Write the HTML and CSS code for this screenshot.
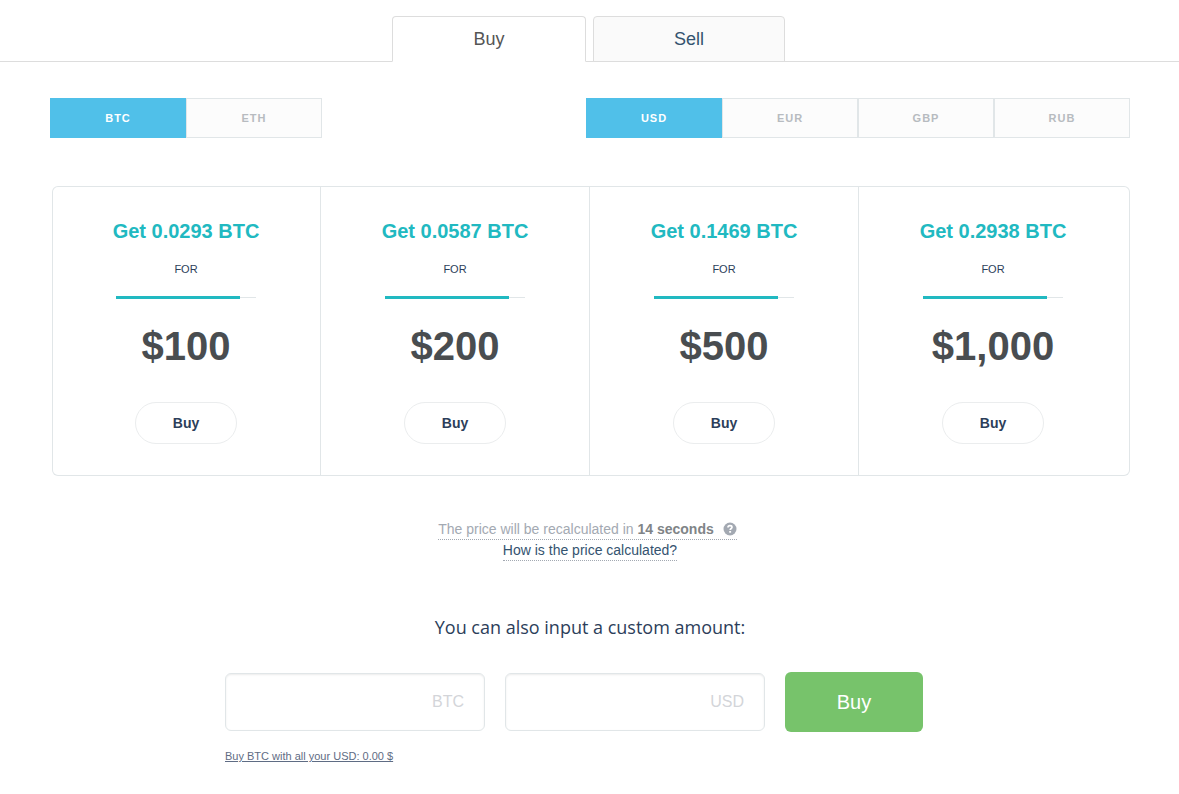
FILE: index.html
```html
<!DOCTYPE html>
<html lang="en">
<head>
<meta charset="utf-8">
<meta name="viewport" content="width=device-width, initial-scale=1">
<title>Buy BTC</title>
<link rel="stylesheet" href="styles.css">
</head>
<body>
<nav class="tabs">
  <a class="tab tab-active" href="#buy">Buy</a>
  <a class="tab" href="#sell">Sell</a>
</nav>
<main class="content">
  <div class="toggles">
    <div class="toggle-group">
      <button class="toggle toggle-active" type="button">BTC</button>
      <button class="toggle" type="button">ETH</button>
    </div>
    <div class="toggle-group">
      <button class="toggle toggle-active" type="button">USD</button>
      <button class="toggle" type="button">EUR</button>
      <button class="toggle" type="button">GBP</button>
      <button class="toggle" type="button">RUB</button>
    </div>
  </div>

  <section class="plans">
    <article class="plan">
      <h2 class="plan-title">Get 0.0293 BTC</h2>
      <p class="plan-for">FOR</p>
      <div class="timer"><div class="timer-fill"></div></div>
      <p class="plan-price">$100</p>
      <button class="plan-buy" type="button">Buy</button>
    </article>
    <article class="plan">
      <h2 class="plan-title">Get 0.0587 BTC</h2>
      <p class="plan-for">FOR</p>
      <div class="timer"><div class="timer-fill"></div></div>
      <p class="plan-price">$200</p>
      <button class="plan-buy" type="button">Buy</button>
    </article>
    <article class="plan">
      <h2 class="plan-title">Get 0.1469 BTC</h2>
      <p class="plan-for">FOR</p>
      <div class="timer"><div class="timer-fill"></div></div>
      <p class="plan-price">$500</p>
      <button class="plan-buy" type="button">Buy</button>
    </article>
    <article class="plan">
      <h2 class="plan-title">Get 0.2938 BTC</h2>
      <p class="plan-for">FOR</p>
      <div class="timer"><div class="timer-fill"></div></div>
      <p class="plan-price">$1,000</p>
      <button class="plan-buy" type="button">Buy</button>
    </article>
  </section>

  <div class="notes">
    <p class="note note-timer"><span>The price will be recalculated in <strong>14 seconds</strong></span>
      <svg class="help" viewBox="0 0 14 14" aria-hidden="true"><circle cx="7" cy="7" r="6.5" fill="#a3a9b2"/><path d="M5 5.500C5 4.200 5.900 3.700 7 3.700s2 .6 2 1.600C9 6.600 7.200 6.500 7.200 8" fill="none" stroke="#fff" stroke-width="1.700"/><path d="M6.200 9h1.900v1.700H6.200z" fill="#fff"/></svg>
    </p>
    <a class="note" href="#how">How is the price calculated?</a>
  </div>

  <h1 class="custom-title">You can also input a custom amount:</h1>
  <form class="custom">
    <div class="fields">
      <input class="field" type="text" placeholder="BTC" aria-label="Amount in BTC">
      <input class="field" type="text" placeholder="USD" aria-label="Amount in USD">
      <button class="submit" type="button">Buy</button>
    </div>
    <a class="all-link" href="#all">Buy BTC with all your USD: 0.00 $</a>
  </form>
</main>
</body>
</html>
```
FILE: styles.css
```css
* {
  box-sizing: border-box;
}

body {
  margin: 0;
  background: #fff;
  color: #2c3e5a;
  font-family: "Liberation Sans", Arial, sans-serif;
  font-size: 14px;
}

h1, h2, p {
  margin: 0;
}

button, input {
  font-family: inherit;
}

button {
  padding: 0;
  cursor: pointer;
}

.tabs {
  display: flex;
  justify-content: center;
  gap: 7px;
  padding: 16px 2px 0 0;
  box-shadow: inset 0 -1px #ddd;
}

.tab {
  width: 192px;
  height: 46px;
  border: 1px solid #ddd;
  border-radius: 4px 4px 0 0;
  background: #fafafa;
  color: #34536f;
  font-size: 18px;
  line-height: 44px;
  text-align: center;
  text-decoration: none;
}

.tab-active {
  width: 194px;
  border-bottom-color: #fff;
  background: #fff;
  color: #555;
}

.content {
  padding: 36px 49px 30px 50px;
}

.toggles {
  display: flex;
  justify-content: space-between;
}

.toggle-group {
  display: flex;
}

.toggle {
  width: 136px;
  height: 40px;
  border: 1px solid #e1e6e8;
  background: #fcfcfc;
  color: #b7bbc0;
  font-size: 11px;
  font-weight: bold;
  letter-spacing: 1px;
}

.toggle-active {
  border-color: #50c0e9;
  background: #50c0e9;
  color: #fff;
}

.plans {
  display: grid;
  grid-template-columns: repeat(4, 1fr);
  margin: 48px 0 0 2px;
  padding-right: 2px;
  border-radius: 6px;
  box-shadow: inset 0 0 0 1px #e1e6e8;
}

.plan {
  display: flex;
  flex-direction: column;
  align-items: center;
  padding: 33px 0 32px;
  border-right: 1px solid #e1e6e8;
}

.plan:last-child {
  border-right-color: transparent;
}

.plan-title {
  color: #21b9c1;
  font-size: 20px;
  line-height: 24px;
}

.plan-for {
  margin-top: 18px;
  font-size: 11px;
  line-height: 16px;
}

.timer {
  width: 140px;
  margin-top: 19px;
  background: linear-gradient(#e1e6e8, #e1e6e8) center / 100% 1px no-repeat;
}

.timer-fill {
  width: 124px;
  height: 3px;
  background: #21b9c1;
}

.plan-price {
  margin-top: 23px;
  color: #494d50;
  font-size: 40px;
  font-weight: bold;
  line-height: 48px;
}

.plan-buy {
  width: 102px;
  height: 42px;
  margin-top: 32px;
  border: 1px solid #ebedee;
  border-radius: 21px;
  background: #fff;
  color: #2c3e5a;
  font-size: 14px;
  font-weight: bold;
}

.notes {
  display: flex;
  flex-direction: column;
  align-items: center;
  margin-top: 43px;
}

.note {
  height: 21px;
  border-bottom: 1px dotted #a3a9b2;
  color: #34536f;
  line-height: 20px;
  text-decoration: none;
}

.note-timer {
  display: flex;
  align-items: center;
  gap: 9px;
  margin-right: 5px;
  color: #a3a9b2;
}

.note-timer strong {
  color: #808487;
}

.help {
  width: 14px;
  height: 14px;
}

.custom-title {
  margin-top: 53px;
  font-family: "Open Sans", sans-serif;
  font-size: 18px;
  font-weight: 400;
  line-height: 26px;
  text-align: center;
}

.custom {
  width: 730px;
  max-width: 100%;
  margin: 32px auto 0;
}

.fields {
  display: flex;
  align-items: center;
  gap: 20px;
}

.field {
  width: 260px;
  height: 58px;
  padding: 0 20px;
  border: 1px solid #e1e6e8;
  border-radius: 6px;
  box-shadow: inset 0 1px 2px rgba(0, 0, 0, 0.08);
  font-size: 16px;
  text-align: right;
}

.field::placeholder {
  color: #d3d5d9;
}

.submit {
  width: 138px;
  height: 60px;
  border: 0;
  border-radius: 6px;
  background: #77c36b;
  color: #fff;
  font-size: 20px;
}

.all-link {
  display: inline-block;
  margin-top: 16px;
  color: #5f6c84;
  font-size: 11px;
  line-height: 16px;
}
```
